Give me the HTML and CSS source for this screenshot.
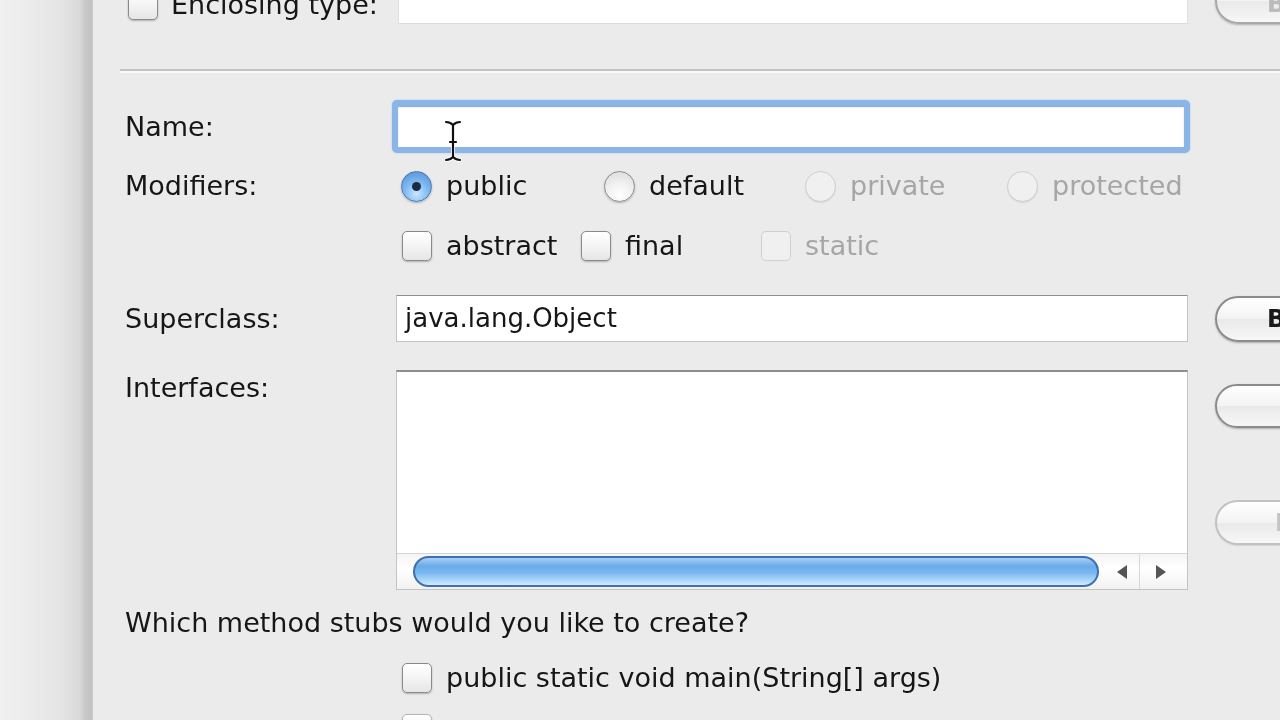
FILE: index.html
```html
<!DOCTYPE html>
<html>
<head>
<meta charset="utf-8">
<link rel="stylesheet" href="styles.css">
</head>
<body>
<div class="screen">
  <div class="side"></div>
  <div class="dialog">
    <div class="row row-encl">
      <div class="label-col encl-label"><span class="cb"></span><span class="encl-text">Enclosing type:</span></div>
      <div class="field field-encl"></div>
      <div class="btn btn-encl"><span>B</span></div>
    </div>
    <div class="sep"></div>

    <div class="row row-name">
      <div class="label-col">Name:</div>
      <div class="focus"></div>
    </div>

    <div class="row row-mod">
      <div class="label-col">Modifiers:</div>
      <div class="radios">
        <label class="opt"><span class="radio on"></span><span>public</span></label>
        <label class="opt"><span class="radio"></span><span>default</span></label>
        <label class="opt dis"><span class="radio"></span><span>private</span></label>
        <label class="opt dis"><span class="radio"></span><span>protected</span></label>
      </div>
    </div>

    <div class="row row-chk">
      <div class="label-col"></div>
      <div class="checks">
        <label class="opt w-abs"><span class="cb"></span><span>abstract</span></label>
        <label class="opt w-fin"><span class="cb"></span><span>final</span></label>
        <label class="opt dis"><span class="cb"></span><span>static</span></label>
      </div>
    </div>

    <div class="row row-super">
      <div class="label-col">Superclass:</div>
      <div class="field field-super">java.lang.Object</div>
      <div class="btn btn-browse"><span>Browse...</span></div>
    </div>

    <div class="row row-intf">
      <div class="label-col top-label">Interfaces:</div>
      <div class="listbox">
        <div class="list-body"></div>
        <div class="hscroll">
          <div class="thumb"></div>
          <div class="arrows">
            <span class="arr arr-l"></span>
            <span class="arr-div"></span>
            <span class="arr arr-r"></span>
          </div>
        </div>
      </div>
      <div class="btn-col">
        <div class="btn btn-add"><span>Add...</span></div>
        <div class="btn btn-remove dis-btn"><span>Remove</span></div>
      </div>
    </div>

    <div class="question">Which method stubs would you like to create?</div>

    <div class="row row-stub">
      <div class="label-col"></div>
      <label class="opt stub"><span class="cb"></span><span>public static void main(String[] args)</span></label>
    </div>
    <div class="row row-stub2">
      <div class="label-col"></div>
      <label class="opt stub stub2"><span class="cb"></span><span class="stub2-text">Constructors from superclass</span></label>
    </div>
  </div>

  <svg class="ibeam" width="20" height="42" viewBox="0 0 20 42">
    <path d="M3 2 Q7 2 10 5 Q13 2 17 2 M10 5 V37 M3 40 Q7 40 10 37 Q13 40 17 40 M7 22 H13" fill="none" stroke="#fff" stroke-width="4" stroke-linecap="round"/>
    <path d="M3 2 Q7 2 10 5 Q13 2 17 2 M10 5 V37 M3 40 Q7 40 10 37 Q13 40 17 40 M7 22 H13" fill="none" stroke="#111" stroke-width="2.2" stroke-linecap="round"/>
  </svg>
</div>
</body>
</html>
```

FILE: styles.css
```css
html, body {
  margin: 0;
  padding: 0;
}
body {
  width: 1280px;
  height: 720px;
  overflow: hidden;
  background: #ebebeb;
  font-family: "DejaVu Sans", "Noto Sans", sans-serif;
  font-size: 27px;
  color: #161616;
}
.screen {
  display: flex;
  height: 720px;
  position: relative;
  filter: blur(0.45px);
}
.side {
  width: 93px;
  flex: none;
  background: linear-gradient(to right, #f0f0f0 0px, #ececec 28px, #e4e4e4 62px, #d9d9d9 80px, #c9c9c9 85px, #c2c2c2 92px, #cfcfcf 93px);
}
.dialog {
  flex: 1;
  padding-left: 32px;
  overflow: hidden;
  background: #ebebeb;
  min-width: 0;
}
.row {
  display: flex;
  align-items: center;
}
.label-col {
  width: 271px;
  flex: none;
  line-height: 30px;
  white-space: nowrap;
}
.row-encl {
  height: 46px;
  margin-top: -22px;
}
.encl-label {
  display: flex;
  align-items: center;
  gap: 13px;
  padding-left: 3px;
  padding-top: 8px;
  box-sizing: border-box;
  height: 46px;
}
.field {
  width: 792px;
  flex: none;
  box-sizing: border-box;
  background: #fff;
  border: 1px solid #c4c4c4;
  border-top-color: #8e8e8e;
}
.field-encl {
  height: 46px;
  border-color: #e0e0e0;
  border-bottom-color: #dcdcdc;
  width: 790px;
  margin-left: 2px;
}
.btn {
  flex: none;
  margin-left: 27px;
  width: 160px;
  box-sizing: border-box;
  border: 2px solid #8c8c8c;
  border-radius: 23px;
  background: linear-gradient(#ffffff, #f3f3f3 50%, #e9e9e9 51%, #f7f7f7);
  box-shadow: 0 1px 2px rgba(0,0,0,0.25);
  display: flex;
  align-items: center;
  padding-left: 50px;
  font-size: 24px;
  font-weight: bold;
  color: #1a1a1a;
  white-space: nowrap;
}
.btn-encl {
  height: 46px;
  border-color: #a8a8a8;
  align-self: flex-start;
  color: #bbb;
  align-items: flex-end;
  padding-bottom: 4px;
}
.sep {
  margin-top: 45px;
  margin-left: -5px;
  height: 2px;
  background: #c3c3c3;
  border-bottom: 2px solid #f9f9f9;
}
.row-name {
  margin-top: 27px;
  height: 53px;
}
.focus {
  width: 798px;
  height: 53px;
  margin-left: -4px;
  flex: none;
  box-sizing: border-box;
  border: 6px solid #8ab5e6;
  border-radius: 5px;
  background: #fff;
  box-shadow: inset 0 1px 1px #7aa6dc, 0 0 2px #a8c8ee;
}
.row-mod {
  margin-top: 17px;
  height: 32px;
}
.radios {
  display: grid;
  grid-template-columns: 203px 201px 202px 180px;
  padding-left: 5px;
}
.opt {
  display: flex;
  align-items: center;
  gap: 14px;
  white-space: nowrap;
  line-height: 30px;
}
.opt.dis {
  color: #a6a6a6;
}
.radio {
  width: 31px;
  height: 31px;
  flex: none;
  box-sizing: border-box;
  border-radius: 50%;
  border: 1.5px solid #8d8d8d;
  background: radial-gradient(circle at 50% 80%, #ffffff 0%, #f1f1f1 45%, #d8d8d8 100%);
  box-shadow: 0 1px 2px rgba(0,0,0,0.25);
  position: relative;
}
.radio.on {
  border-color: #4a78b0;
  background: radial-gradient(circle at 50% 75%, #c9e6ff 0%, #7fbaf0 45%, #4d8ad3 100%);
}
.radio.on::after {
  content: "";
  position: absolute;
  left: 50%;
  top: 50%;
  width: 9px;
  height: 9px;
  margin: -4.5px 0 0 -4.5px;
  border-radius: 50%;
  background: #1b2b45;
}
.dis .radio {
  border-color: #cfcfcf;
  background: #f0f0f0;
  box-shadow: 0 1px 1px rgba(0,0,0,0.08);
}
.cb {
  width: 30px;
  height: 30px;
  flex: none;
  box-sizing: border-box;
  border: 1.5px solid #8a8a8a;
  border-radius: 5px;
  background: linear-gradient(#ffffff, #f4f4f4 50%, #e6e6e6);
  box-shadow: 0 1px 2px rgba(0,0,0,0.25);
}
.dis .cb {
  border-color: #d0d0d0;
  background: #f0f0f0;
  box-shadow: none;
}
.row-chk {
  margin-top: 28px;
  height: 32px;
}
.checks {
  display: flex;
  padding-left: 6px;
}
.w-abs { width: 179px; }
.w-fin { width: 180px; }
.row-super {
  margin-top: 33px;
  height: 47px;
}
.field-super {
  height: 47px;
  line-height: 44px;
  padding-left: 8px;
  font-size: 26px;
  color: #161616;
}
.btn-browse {
  height: 46px;
  padding-left: 50px;
}
.row-intf {
  margin-top: 28px;
  height: 220px;
  align-items: flex-start;
}
.top-label {
  padding-top: 3px;
}
.listbox {
  width: 792px;
  height: 220px;
  flex: none;
  box-sizing: border-box;
  background: #fff;
  border: 1px solid #c4c4c4;
  border-top: 2px solid #8e8e8e;
  display: flex;
  flex-direction: column;
}
.list-body {
  flex: 1;
}
.hscroll {
  height: 35px;
  flex: none;
  border-top: 1px solid #d6d6d6;
  background: linear-gradient(#f4f4f4, #ffffff 40%, #f2f2f2);
  display: flex;
  align-items: center;
  padding-left: 16px;
}
.thumb {
  width: 686px;
  height: 31px;
  box-sizing: border-box;
  border: 2px solid #3f6fae;
  border-radius: 16px;
  background: linear-gradient(#a6d0f6 0%, #6aaae9 30%, #7ab8f0 55%, #b0dafc 85%, #d0ebff 100%);
}
.arrows {
  flex: 1;
  height: 35px;
  display: flex;
  align-items: center;
  padding-left: 18px;
}
.arr {
  width: 0;
  height: 0;
  border-top: 7px solid transparent;
  border-bottom: 7px solid transparent;
}
.arr-l {
  border-right: 10px solid #555;
}
.arr-r {
  border-left: 10px solid #555;
}
.arr-div {
  width: 1px;
  height: 35px;
  background: #d8d8d8;
  margin: 0 16px 0 12px;
}
.btn-col {
  display: flex;
  flex-direction: column;
  flex: none;
}
.btn-add {
  margin-top: 14px;
  height: 44px;
  padding-left: 70px;
}
.btn-remove {
  margin-top: 72px;
  height: 45px;
  padding-left: 58px;
}
.dis-btn {
  border-color: #c2c2c2;
  color: #c4c4c4;
  box-shadow: 0 1px 1px rgba(0,0,0,0.1);
}
.question {
  margin-top: 18px;
  line-height: 30px;
  height: 30px;
  white-space: nowrap;
}
.row-stub {
  margin-top: 24px;
  height: 31px;
}
.stub {
  padding-left: 6px;
}
.row-stub2 {
  margin-top: 21px;
  height: 31px;
  align-items: flex-start;
}
.stub2 {
  align-items: flex-start;
}
.stub2 .cb {
  border-color: #b5b5b5;
}
.stub2-text {
  padding-top: 10px;
}
.ibeam {
  position: absolute;
  left: 443px;
  top: 120px;
}
```
